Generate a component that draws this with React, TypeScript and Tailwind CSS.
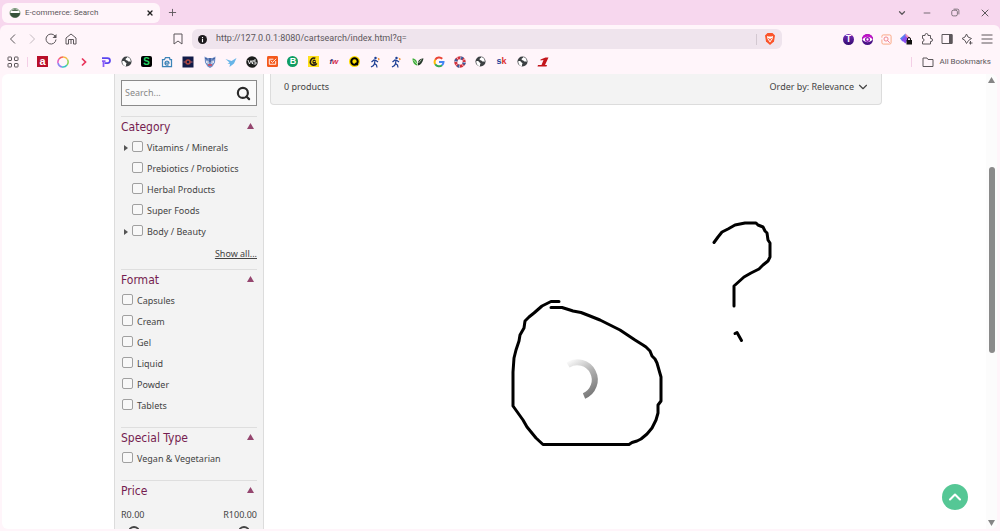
import type { ReactNode } from 'react';
import { ChevronDown, ChevronUp, Minus, Plus, Search, X } from 'lucide-react';

interface Option {
  label: string;
  hasChildren?: boolean;
}

const categories: Option[] = [
  { label: 'Vitamins / Minerals', hasChildren: true },
  { label: 'Prebiotics / Probiotics' },
  { label: 'Herbal Products' },
  { label: 'Super Foods' },
  { label: 'Body / Beauty', hasChildren: true },
];

const formats: Option[] = [
  { label: 'Capsules' },
  { label: 'Cream' },
  { label: 'Gel' },
  { label: 'Liquid' },
  { label: 'Powder' },
  { label: 'Tablets' },
];

function Icon({ children, size = 'size-3' }: { children: ReactNode; size?: string }) {
  return (
    <svg viewBox="0 0 24 24" className={`${size} shrink-0`} fill="none" stroke="currentColor" strokeWidth="2" aria-hidden="true">
      {children}
    </svg>
  );
}

function GlobeIcon() {
  return (
    <Icon size="size-[11px]">
      <circle cx="12" cy="12" r="11" fill="#3c4043" stroke="none" />
      <path d="M3 11c3 0 5 0 6 2s3 1 3 3-2 3-1 6c-5 0-9-5-8-11zM14 2c-1 3-4 2-4 5s4 2 5 4 4 0 6 2c1-5-2-10-7-11z" fill="#fff" stroke="none" />
    </Icon>
  );
}

function RunnerIcon() {
  return (
    <Icon>
      <circle cx="13" cy="4" r="2.500" fill="#1d3f94" stroke="none" />
      <path d="M5 12l5-4 4 1 4 3M12 9l-1 6 4 3 1 5M11 15l-2 4-5 3" stroke="#1d3f94" strokeWidth="2.5" />
      <path d="M17 3l5 3-3 3z" fill="#f08a24" stroke="none" />
    </Icon>
  );
}

const bookmarks: { name: string; icon: ReactNode }[] = [
  {
    name: 'Absa',
    icon: (
      <span className="flex size-[11px] items-center justify-center bg-[#b80f2a] text-[11px] leading-none font-bold text-white">a</span>
    ),
  },
  {
    name: 'Ring',
    icon: (
      <Icon>
        <g strokeWidth="3">
          <path d="M12 2a10 10 0 0 1 9 5" stroke="#f4b942" />
          <path d="M21 7a10 10 0 0 1-1 11" stroke="#8bd450" />
          <path d="M20 18a10 10 0 0 1-10 4" stroke="#38c6c0" />
          <path d="M10 22a10 10 0 0 1-8-8" stroke="#8b84f1" />
          <path d="M2 14a10 10 0 0 1 2-8" stroke="#e45cc0" />
          <path d="M4 6a10 10 0 0 1 8-4" stroke="#f5675b" />
        </g>
      </Icon>
    ),
  },
  { name: 'Arrow', icon: <Icon><path d="M8 5l7 7-7 7" stroke="#e8355c" strokeWidth="3.5" /></Icon> },
  {
    name: 'P',
    icon: (
      <Icon>
        <path d="M4 4h11a5 5 0 0 1 0 10H9" stroke="#5b45f0" strokeWidth="3.5" />
        <path d="M7 12v10M4 10h7" stroke="#8a5cf6" strokeWidth="3.5" />
      </Icon>
    ),
  },
  { name: 'Site', icon: <GlobeIcon /> },
  {
    name: 'S',
    icon: <span className="flex size-[11px] items-center justify-center rounded-xs bg-black text-[10px] leading-none font-bold text-[#27d367]">S</span>,
  },
  {
    name: 'Camera',
    icon: (
      <Icon>
        <path d="M3 7h4l2-4h8l1 4h3v14H3z" stroke="#3d84b8" strokeWidth="2.5" />
        <path d="M8 14h8a4 4 0 1 0-1 3" stroke="#3d84b8" strokeWidth="2.5" />
      </Icon>
    ),
  },
  {
    name: 'Badge',
    icon: (
      <Icon>
        <path d="M1 1h22v22H1z" fill="#121b48" stroke="none" />
        <circle cx="12" cy="12" r="4" stroke="#b0483f" strokeWidth="3" />
        <path d="M3 12h4M17 12h4" stroke="#b9626a" />
      </Icon>
    ),
  },
  {
    name: 'Mascot',
    icon: (
      <Icon>
        <path d="M1 1l6 3h10l6-3-1 12-5 8-5 3-5-3-5-8z" fill="#6f8fc8" stroke="none" />
        <path d="M5 9l5 2-1 5-5-3zM19 9l-5 2 1 5 5-3z" fill="#fff" stroke="none" />
        <path d="M12 4v8M3 4l3 3M21 4l-3 3M7 12h2M15 12h2" stroke="#253a7a" />
        <path d="M8 18h8" stroke="#d9485a" strokeWidth="3" />
      </Icon>
    ),
  },
  {
    name: 'Bird',
    icon: (
      <Icon>
        <path d="M1 6l12 4 10-6-5 11-9 7 1-6-5-1 4-2z" fill="#68b5e8" stroke="none" />
      </Icon>
    ),
  },
  {
    name: 'MS',
    icon: (
      <Icon>
        <circle cx="12" cy="12" r="11.500" fill="#1c1c1c" stroke="none" />
        <path d="M4 8l3 8 3-7 3 7 1-8M20 8h-4v4h4v4h-5" stroke="#fff" strokeWidth="1.7" />
      </Icon>
    ),
  },
  {
    name: 'Check mail',
    icon: (
      <Icon size="size-[11px]">
        <rect width="24" height="24" rx="3" fill="#f4581c" stroke="none" />
        <path d="M19 11v7H5V7h9M8 10l4 4 8-8" stroke="#fff" />
      </Icon>
    ),
  },
  {
    name: 'B',
    icon: <span className="flex size-[11px] items-center justify-center rounded-full bg-[#0f9d63] text-[9px] leading-none font-bold text-white">B</span>,
  },
  {
    name: 'Chimp',
    icon: (
      <Icon size="size-[11px]">
        <path d="M0 0h24v24H0z" fill="#ffe01b" stroke="none" />
        <path d="M16 5c-7-3-11 4-11 9 1 7 11 8 14 2" stroke="#241c15" strokeWidth="3.5" />
        <path d="M12 8c-3 2-3 6-1 9h5c3-2 1-4 1-6s-2-4-5-3z" fill="#241c15" stroke="none" />
        <path d="M12 12h4" stroke="#ffe01b" />
      </Icon>
    ),
  },
  {
    name: 'FW',
    icon: (
      <span className="flex size-3 items-center justify-center text-[8px] leading-none font-bold italic">
        <span className="text-[#27327d]">f</span>
        <span className="text-[#d3284f]">w</span>
      </span>
    ),
  },
  {
    name: 'Q',
    icon: (
      <Icon size="size-[11px]">
        <circle cx="12" cy="12" r="12" fill="#ffdf00" stroke="none" />
        <circle cx="12" cy="12" r="7" stroke="#000" strokeWidth="4.5" />
        <path d="M14 15l5 5" stroke="#000" strokeWidth="4" />
      </Icon>
    ),
  },
  { name: 'Runner one', icon: <RunnerIcon /> },
  { name: 'Runner two', icon: <RunnerIcon /> },
  {
    name: 'Leaf',
    icon: (
      <Icon>
        <path d="M1 5c6 0 10 5 10 14C4 18 1 12 1 5z" fill="#3fae3a" stroke="none" />
        <path d="M23 5c-8 0-12 4-11 14 6-1 9-6 11-14z" fill="#26382a" stroke="none" />
        <path d="M3 8l8 9M13 14l6-7" stroke="#e5f5dd" strokeWidth="1.5" />
      </Icon>
    ),
  },
  {
    name: 'Google',
    icon: (
      <Icon>
        <g strokeWidth="4">
          <path d="M4.500 7.500A9 9 0 0 1 18.500 5.500" stroke="#ea4335" />
          <path d="M4.500 16.500a9 9 0 0 1 0-9" stroke="#fbbc05" />
          <path d="M18 18.500A9 9 0 0 1 4.500 16.500" stroke="#34a853" />
          <path d="M12 12h9a9 9 0 0 1-3 6.500" stroke="#4285f4" />
        </g>
      </Icon>
    ),
  },
  {
    name: 'Wheel',
    icon: (
      <Icon>
        <circle cx="12" cy="12" r="8.500" stroke="#d32f3c" strokeWidth="6" />
        <circle cx="12" cy="12" r="8.500" stroke="#3a5c9c" strokeWidth="6" strokeDasharray="5 8.300" />
        <circle cx="12" cy="12" r="8.500" stroke="#fff" strokeWidth="6" strokeDasharray="1 5.700" />
      </Icon>
    ),
  },
  { name: 'Site two', icon: <GlobeIcon /> },
  {
    name: 'SK',
    icon: (
      <span className="flex size-3 items-center justify-center text-[9px] leading-none font-bold">
        <span className="text-[#27429b]">s</span>
        <span className="text-[#e0322f]">k</span>
      </span>
    ),
  },
  { name: 'Site three', icon: <GlobeIcon /> },
  {
    name: 'One',
    icon: (
      <Icon>
        <path d="M7 7l10-4h6l-7 15h4l-1 3H1l1-3h7l4-10-6 1z" fill="#c3161c" stroke="none" />
      </Icon>
    ),
  },
];

const toolbarIcons: { name: string; icon: ReactNode }[] = [
  {
    name: 'T extension',
    icon: (
      <span className="flex size-[11px] items-center justify-center rounded-full bg-linear-to-b from-[#7a2bb8] to-[#330a70] text-[9px] leading-none font-bold text-white">
        T
      </span>
    ),
  },
  {
    name: 'Eye extension',
    icon: (
      <Icon size="size-[11px]">
        <circle cx="12" cy="12" r="12" fill="#4a1186" stroke="none" />
        <path d="M0 12a12 12 0 0 1 24 0z" fill="#c313c8" stroke="none" />
        <path d="M1 12c6-8 16-8 22 0-6 8-16 8-22 0z" fill="#fff" stroke="none" />
        <circle cx="12" cy="12" r="4" fill="#fff" stroke="#8f12b5" strokeWidth="3" />
      </Icon>
    ),
  },
  {
    name: 'Image search extension',
    icon: (
      <Icon size="size-[11px]">
        <path d="M2 8V5a3 3 0 0 1 3-3h14a3 3 0 0 1 3 3v14a3 3 0 0 1-3 3H5a3 3 0 0 1-3-3v-7" stroke="#f9a27c" />
        <circle cx="11" cy="11" r="4.500" stroke="#ee7f87" />
        <path d="M14 14l5 5" stroke="#ee6f87" />
      </Icon>
    ),
  },
  {
    name: 'Lock extension',
    icon: (
      <Icon>
        <path d="M11 1L0 11l5 6 9-8z" fill="#5a7cf0" stroke="none" />
        <path d="M11 1l11 10H11z" fill="#f08bb4" stroke="none" />
        <path d="M3 14l8-8 5 5-5 10z" fill="#8a4cf0" stroke="none" />
        <path d="M13 14h11v9H13z" fill="#111" stroke="none" />
        <path d="M15 15v-3a3 3 0 0 1 6 0v3" stroke="#111" />
      </Icon>
    ),
  },
  {
    name: 'Extensions',
    icon: (
      <Icon>
        <path d="M3 5h5V4a3 3 0 0 1 6 0v1h5v6h1a3 3 0 0 1 0 6h-1v5H3v-5a3 3 0 0 0 0-6z" strokeLinejoin="round" />
      </Icon>
    ),
  },
  {
    name: 'Sidebar',
    icon: (
      <Icon>
        <path d="M2 3h20v18H2z" />
        <path d="M17 3h5v18h-5z" fill="currentColor" />
      </Icon>
    ),
  },
  {
    name: 'Leo',
    icon: (
      <Icon>
        <path d="M11 2l3 6 7 3-6 4-4 6-3-6-6-4 6-3z" strokeLinejoin="round" />
        <path d="M19 16v7M16 20h7" />
      </Icon>
    ),
  },
  { name: 'Menu', icon: <Icon><path d="M1 4h22M1 12h22M1 20h22" /></Icon> },
];

function BrowserChrome() {
  return (
    <header className="shrink-0 bg-[#f7d7ee] font-['Roboto',sans-serif] text-[#5c575b]">
      <div className="flex h-[25px] items-center justify-between pr-[9px] pl-[2px]">
        <div className="flex items-center gap-[7px]">
          <div className="flex h-5 w-[158px] items-center gap-1 rounded-md bg-[#fff5fa] pr-[6px] pl-[7px]">
            <Icon>
              <ellipse cx="12" cy="12" rx="10" ry="9" fill="#fff" stroke="#7a9a7a" />
              <path d="M2 12h20c0 5-4 9-10 9S2 17 2 12z" fill="#36523a" stroke="none" />
              <path d="M5 8c4-5 10-5 14 0z" fill="#536b53" stroke="none" />
            </Icon>
            <span className="grow text-[8px]">E-commerce: Search</span>
            <button aria-label="Close tab" className="text-[#222]"><X className="size-2" strokeWidth={4} /></button>
          </div>
          <button aria-label="New tab"><Plus className="size-[11px]" strokeWidth={2} /></button>
        </div>
        <div className="flex items-center gap-[15px]">
          <button aria-label="Search tabs"><ChevronDown className="size-[10px]" strokeWidth={3} /></button>
          <button aria-label="Minimize"><Minus className="size-[10px]" strokeWidth={2} /></button>
          <button aria-label="Restore" className="ml-1">
            <Icon size="size-[9px]">
              <rect x="2" y="6" width="15" height="15" rx="4" />
              <path d="M7 3h10a4 4 0 0 1 4 4v10" />
            </Icon>
          </button>
          <button aria-label="Close window" className="ml-1"><X className="size-3" strokeWidth={2} /></button>
        </div>
      </div>

      <div className="rounded-t-md bg-[#fff5fa]">
        <div className="flex h-7 items-center px-[7px]">
          <div className="flex items-center gap-[7px]">
            <button aria-label="Back"><Icon><path d="M16 3l-9 9 9 9" /></Icon></button>
            <button aria-label="Forward" className="text-[#c3bac0]"><Icon><path d="M8 3l9 9-9 9" /></Icon></button>
            <button aria-label="Reload">
              <Icon>
                <path d="M20 6a10 10 0 1 0 2 7" />
                <path d="M23 2v8h-8z" fill="currentColor" stroke="none" />
              </Icon>
            </button>
            <button aria-label="Home" className="ml-px">
              <Icon>
                <path d="M2 10l10-8 10 8v12h-5v-9H7v9H2zM12 13v9" strokeLinejoin="round" />
              </Icon>
            </button>
          </div>
          <button aria-label="Bookmark this page" className="ml-[95px]">
            <Icon><path d="M4 2h16v20l-8-6-8 6z" strokeLinejoin="round" /></Icon>
          </button>
          <div className="ml-2 flex h-5 grow items-center rounded-md bg-[#efe4ed] px-[6px]">
            <Icon size="size-[9px]">
              <circle cx="12" cy="12" r="12" fill="#1d1a1d" stroke="none" />
              <path d="M12 5v3M12 10v9" stroke="#fff" strokeWidth="3" />
            </Icon>
            <input
              aria-label="Address"
              defaultValue="http://127.0.0.1:8080/cartsearch/index.html?q="
              className="mx-[9px] min-w-0 grow bg-transparent text-[9px] outline-none"
            />
            <span className="mr-[7px] h-[11px] w-px bg-[#d3c8d1]" />
            <Icon>
              <path d="M7 0h10l5 5-2 12-8 7-8-7L2 5z" fill="#fb542b" stroke="none" />
              <path d="M6 6l3 1h6l3-1-1 6-5 7-5-7z" fill="#fff" stroke="none" />
              <path d="M9 10l3 5 3-5" stroke="#fb542b" />
            </Icon>
          </div>
          <div className="ml-[61px] flex w-[150px] items-center justify-between">
            {toolbarIcons.map((t) => (
              <button key={t.name} aria-label={t.name}>
                {t.icon}
              </button>
            ))}
          </div>
        </div>

        <div className="flex h-[21px] items-center justify-between pr-[9px] pb-1 pl-[7px]">
          <div className="flex items-center font-['Liberation_Sans',sans-serif]">
            <button aria-label="Bookmark groups">
              <Icon>
                <rect x="2" y="2" width="7" height="7" rx="1" />
                <rect x="15" y="2" width="7" height="7" rx="1" />
                <rect x="2" y="15" width="7" height="7" rx="1" />
                <rect x="15" y="15" width="7" height="7" rx="1" />
              </Icon>
            </button>
            <span className="mr-[9px] ml-2 h-[10px] w-px bg-[#f3cfe6]" />
            <nav className="flex w-[512px] items-center justify-between">
              {bookmarks.map((b) => (
                <a key={b.name} href="#" aria-label={b.name}>
                  {b.icon}
                </a>
              ))}
            </nav>
          </div>
          <div className="flex items-center">
            <span className="mr-[10px] h-[10px] w-px bg-[#f3cfe6]" />
            <button className="flex items-center gap-[5px] text-[8px]">
              <Icon><path d="M2 4h8l2 3h10v14H2z" strokeLinejoin="round" /></Icon>
              All Bookmarks
            </button>
          </div>
        </div>
      </div>
    </header>
  );
}

function FilterSection({ title, className, children }: { title: string; className?: string; children: ReactNode }) {
  return (
    <section className={`border-t border-[#dedede] ${className ?? ''}`}>
      <h2>
        <button className="flex h-5 w-full items-center justify-between pr-[3px] font-['DejaVu_Sans_Condensed','DejaVu_Sans',sans-serif] text-[12px] leading-5 text-[#751d50]">
          {title}
          <svg viewBox="0 0 7 6" className="mb-[2px] h-[6px] w-[7px]" aria-hidden="true">
            <path d="M3.500 0L7 6H0z" fill="#95466f" />
          </svg>
        </button>
      </h2>
      {children}
    </section>
  );
}

function OptionList({ options, tree }: { options: Option[]; tree?: boolean }) {
  return (
    <ul>
      {options.map((o) => (
        <li key={o.label} className="flex h-[21px] items-center">
          {tree && (
            <span className="flex w-[10px] items-center pl-[3px]">
              {o.hasChildren && (
                <svg viewBox="0 0 4 6" className="h-[6px] w-1" aria-hidden="true">
                  <path d="M0 0l4 3-4 3z" fill="#555" />
                </svg>
              )}
            </span>
          )}
          <label className="ml-px flex items-center gap-1 text-[9px]">
            <input type="checkbox" className="mb-[3px] size-[11px] appearance-none rounded-xs border border-[#a0a0a0] bg-[#f8f8f8]" />
            {o.label}
          </label>
        </li>
      ))}
    </ul>
  );
}

const thumb =
  'h-3 min-w-0 flex-1 appearance-none bg-transparent [&::-webkit-slider-thumb]:size-3 [&::-webkit-slider-thumb]:appearance-none [&::-webkit-slider-thumb]:rounded-full [&::-webkit-slider-thumb]:border-2 [&::-webkit-slider-thumb]:border-[#444] [&::-webkit-slider-thumb]:bg-[#f3f3f3]';

function Filters() {
  return (
    <aside className="w-[150px] shrink-0 border-x border-[#dcdcdc] bg-[#f3f3f3] px-[6px] pt-[6px]">
      <div className="mb-[10px] flex h-[26px] items-center border border-[#8a8a8a] bg-[#fafafa] pr-[5px] pl-[3px]">
        <input
          type="search"
          aria-label="Search"
          placeholder="Search..."
          className="min-w-0 grow bg-transparent text-[9px] outline-none placeholder:text-[#888]"
        />
        <button aria-label="Run search"><Search className="size-[15px] text-[#2b2b2b]" strokeWidth={3.5} /></button>
      </div>

      <FilterSection title="Category" className="pb-[3px]">
        <OptionList options={categories} tree />
        <div className="flex h-6 items-center justify-end">
          <a href="#" className="text-[9px] underline">Show all...</a>
        </div>
      </FilterSection>
      <FilterSection title="Format" className="pb-[11px]">
        <OptionList options={formats} />
      </FilterSection>
      <FilterSection title="Special Type" className="pb-[11px]">
        <OptionList options={[{ label: 'Vegan & Vegetarian' }]} />
      </FilterSection>
      <FilterSection title="Price">
        <div className="mt-1 flex h-5 items-center justify-between text-[9px]">
          <span>R0.00</span>
          <span>R100.00</span>
        </div>
        <div className="flex pt-px">
          <input type="range" aria-label="Lowest price" min={0} max={40} defaultValue={5} className={thumb} />
          <input type="range" aria-label="Highest price" min={0} max={40} defaultValue={35} className={thumb} />
        </div>
      </FilterSection>
    </aside>
  );
}

function Sketch() {
  return (
    <svg viewBox="500 210 290 250" className="pointer-events-none absolute top-[136px] left-[498px] h-[250px] w-[290px]" fill="none" aria-hidden="true">
      <defs>
        <linearGradient id="spin" x1="565" y1="362" x2="588" y2="398" gradientUnits="userSpaceOnUse">
          <stop offset="0" stopColor="#fff" />
          <stop offset="0.5" stopColor="#b0b0b0" />
          <stop offset="1" stopColor="#777" />
        </linearGradient>
      </defs>
      <path d="M568 365A17.500 17.500 0 1 1 584 396" stroke="url(#spin)" strokeWidth="6" />
      <g stroke="#000" strokeWidth="3" strokeLinecap="round" strokeLinejoin="round">
        <path d="M559 301.500H551L548 303 542 306 534 313 529 317 525 321 524 328 520 335 519 341 516 350 514 358 513 372V406L518 413 523 420 527 427 536 438 543 444.500H629L632 442.500 637 441 641 439 647 434 652 428 656 420 658 413 658 405 661 401V377L657 363 655 359 652 356 650 351 646 347 643 345 635 340 620 330 606 323 600 320 590 316 581 312.500 573 311 570 310 562 307.500H551" />
        <path d="M714 242.500L718 237 722 232 728 229 735 225 740 224 745 223H756L758 225 763 227 765 231 767 233 768 240 770 243V257L768 261 763 265 759 269 751 273 744 277 734 286V306" />
        <path d="M735 333.500L737 332.500 741.500 340.500" />
      </g>
    </svg>
  );
}

export default function App() {
  return (
    <div className="flex h-screen flex-col overflow-hidden bg-[#fff5fa]">
      <BrowserChrome />
      <div className="relative mr-[3px] mb-[2px] ml-[2px] flex min-h-0 grow overflow-hidden rounded-md bg-white font-['Noto_Sans',sans-serif] text-[#444]">
        <main className="flex min-w-0 grow gap-[6px] overflow-hidden pr-[104px] pl-[112px]">
          <Filters />
          <div className="min-w-0 grow">
            <div className="flex h-[31px] items-center justify-between rounded-b-sm border border-t-0 border-[#dcdcdc] bg-[#f3f3f3] pr-[11px] pb-[5px] pl-[13px] text-[9px]">
              <span>0 products</span>
              <button className="flex items-center gap-[2px]">
                Order by: Relevance
                <ChevronDown className="size-[14px]" strokeWidth={2} />
              </button>
            </div>
          </div>
        </main>

        <div className="flex w-[11px] shrink-0 flex-col items-center bg-[#fcfcfc] py-[3px]">
          <svg viewBox="0 0 7 6" className="h-[6px] w-[7px]" aria-hidden="true">
            <path d="M3.500 0L7 6H0z" fill="#858585" />
          </svg>
          <div className="mt-[84px] h-[186px] w-[6px] rounded-full bg-[#8a8a8a]" />
          <svg viewBox="0 0 7 6" className="mt-auto h-[6px] w-[7px]" aria-hidden="true">
            <path d="M0 0h7L3.500 6z" fill="#858585" />
          </svg>
        </div>

        <Sketch />
        <button
          aria-label="Back to top"
          className="absolute right-[29px] bottom-[19px] flex size-[26px] items-center justify-center rounded-full bg-[#55c795] text-white"
        >
          <ChevronUp className="size-5" strokeWidth={2.5} />
        </button>
      </div>
    </div>
  );
}
